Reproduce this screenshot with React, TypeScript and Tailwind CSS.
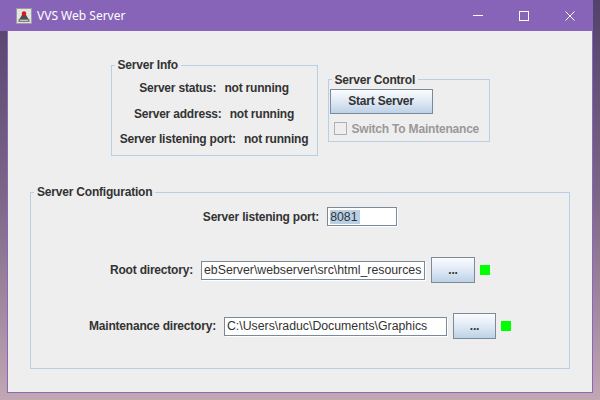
import React from 'react';

const font = { fontFamily: '"Liberation Sans", Arial, sans-serif' };

const label = 'text-[12px] leading-[14px] font-bold tracking-[-0.2px] text-[#333333] whitespace-nowrap';

const TitledBox: React.FC<{ title: string; className: string; children: React.ReactNode }> = ({ title, className, children }) => (
  <fieldset className={`border border-[#b8cfe5] min-w-0 ${className}`}>
    <legend className={`ml-[3px] px-[3px] ${label}`}>{title}</legend>
    {children}
  </fieldset>
);

const MetalButton: React.FC<{ text: string; className: string }> = ({ text, className }) => (
  <div
    className={`flex items-center justify-center border border-[#7a8a99] bg-linear-to-b from-[#fbfcfe] via-[#dfe9f4] to-[#bdd2e7] ${label} ${className}`}
  >
    {text}
  </div>
);

const Field: React.FC<{ width: string; children: React.ReactNode }> = ({ width, children }) => (
  <div
    className={`h-[19px] ${width} flex items-center pl-[2px] bg-white border border-[#7a8a99] shadow-[1px_1px_0_#ffffff] overflow-hidden whitespace-nowrap text-[12.3px] leading-[14px] text-[#333333]`}
  >
    {children}
  </div>
);

const Status = () => <div className="w-[10px] h-[10px] bg-[#00ff00]" />;

const AppIcon = () => (
  <svg width="16" height="16" viewBox="0 0 16 16">
    <rect x="0.5" y="0.5" width="15" height="15" fill="#e4e4e4" stroke="#9c9c9c" />
    <path d="M8 3.5 L12.5 11 H3.5 Z" fill="#4e4e4e" />
    <rect x="2.5" y="11" width="11" height="3" fill="#7b7b7b" />
    <rect x="4" y="12" width="8" height="1" fill="#c8c8c8" />
    <circle cx="8" cy="5.5" r="2.2" fill="#e3141b" />
  </svg>
);

const TitleBar = () => (
  <div className="h-[31px] w-[593px] bg-[#8764b8] flex items-center text-white shrink-0">
    <div className="pl-[16px] flex items-center">
      <AppIcon />
    </div>
    <span className="ml-[5px] text-[12px]" style={{ fontFamily: '"Noto Sans", "Open Sans", sans-serif' }}>
      VVS Web Server
    </span>
    <div className="ml-auto flex h-full">
      <div className="w-[46px] flex items-center justify-center">
        <div className="w-[10px] h-px bg-white" />
      </div>
      <div className="w-[46px] flex items-center justify-center">
        <div className="w-[10px] h-[10px] border border-white" />
      </div>
      <div className="w-[46px] flex items-center justify-center">
        <svg width="10" height="10" viewBox="0 0 10 10">
          <path d="M0.5 0.5 L9.5 9.5 M9.5 0.5 L0.5 9.5" stroke="#ffffff" strokeWidth="1" />
        </svg>
      </div>
    </div>
  </div>
);

const App: React.FC = () => {
  return (
    <div
      className="w-[600px] h-[400px] overflow-hidden bg-linear-to-b from-[#54426c] via-[#7d6788] to-[#c2a7b3]"
      style={font}
    >
      <TitleBar />
      <div className="flex h-[362px]">
        <div className="w-[7px]" />
        <div className="w-[586px] border-l border-r border-b border-[#8a66bd] bg-[#eeeeee] flex flex-col items-center pt-[27px]">
          <div className="flex items-center gap-[10px]">
            <TitledBox title="Server Info" className="w-[207px] h-[98px]">
              <div className="flex flex-col items-center pt-[9px] gap-[11.5px]">
                <div className="flex gap-[8px]">
                  <span className={label}>Server status:</span>
                  <span className={label}>not running</span>
                </div>
                <div className="flex gap-[8px]">
                  <span className={label}>Server address:</span>
                  <span className={label}>not running</span>
                </div>
                <div className="flex gap-[8px]">
                  <span className={label}>Server listening port:</span>
                  <span className={label}>not running</span>
                </div>
              </div>
            </TitledBox>

            <TitledBox title="Server Control" className="w-[162px] h-[69px]">
              <div className="flex flex-col pt-[2px] pl-[1px]">
                <MetalButton text="Start Server" className="w-[103px] h-[25px]" />
                <div className="flex items-center gap-[5px] mt-[8px] ml-[4px]">
                  <div className="w-[13px] h-[13px] border border-[#b0b0b0] bg-[#eeeeee]" />
                  <span className="text-[12px] leading-[14px] font-bold tracking-[-0.2px] text-[#999999] whitespace-nowrap">
                    Switch To Maintenance
                  </span>
                </div>
              </div>
            </TitledBox>
          </div>

          <TitledBox title="Server Configuration" className="w-[540px] h-[184px] mt-[29px]">
            <div className="flex flex-col items-center pt-[8px]">
              <div className="flex items-center gap-[8px] h-[19px]">
                <span className={label}>Server listening port:</span>
                <Field width="w-[70px]">
                  <span className="bg-[#b8cfe5] pr-[2px]">8081</span>
                </Field>
              </div>

              <div className="flex items-center h-[26px] mt-[31px]">
                <span className={label}>Root directory:</span>
                <div className="ml-[8px]">
                  <Field width="w-[224px]">ebServer\webserver\src\html_resources</Field>
                </div>
                <MetalButton text="..." className="w-[44px] h-[26px] ml-[6px]" />
                <div className="ml-[5px]">
                  <Status />
                </div>
              </div>

              <div className="flex items-center h-[26px] mt-[30px]">
                <span className={label}>Maintenance directory:</span>
                <div className="ml-[8px]">
                  <Field width="w-[223px]">C:\Users\raduc\Documents\Graphics</Field>
                </div>
                <MetalButton text="..." className="w-[43px] h-[26px] ml-[6px]" />
                <div className="ml-[5px]">
                  <Status />
                </div>
              </div>
            </div>
          </TitledBox>
        </div>
      </div>
    </div>
  );
};

export default App;
